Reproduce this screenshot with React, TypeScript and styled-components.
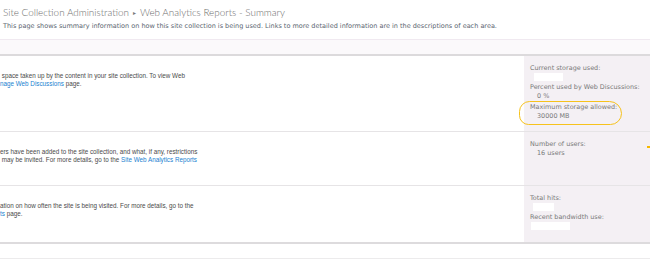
import React from 'react';
import styled, {createGlobalStyle} from 'styled-components';

const GlobalStyle = createGlobalStyle`
  html, body {
    margin: 0;
    padding: 0;
    background: #ffffff;
  }
  body {
    width: 650px;
    height: 259px;
    overflow: hidden;
  }
`;

const Page = styled.div`
  width: 650px;
  height: 259px;
  overflow: hidden;
  background: #ffffff;
  font-family: 'DejaVu Sans', Verdana, sans-serif;
`;

const Header = styled.header`
  padding: 6px 0 0 3px;
  height: 33px;
`;

const Title = styled.h1`
  margin: 0;
  font-family: 'Lato', 'Liberation Sans', Arial, sans-serif;
  font-weight: 300;
  font-size: 9.9px;
  line-height: 12px;
  color: #6c6c6c;
  white-space: nowrap;
`;

const Crumb = styled.span`
  display: inline-block;
  margin: 0 4px;
  font-size: 6px;
  vertical-align: 1px;
  color: #7a7a7a;
`;

const Description = styled.p`
  margin: 3px 0 0;
  font-size: 6.5px;
  line-height: 8px;
  color: #5a6570;
  white-space: nowrap;
`;

const Band = styled.div`
  height: 14px;
  border-top: 1px solid #f0e9f0;
  border-bottom: 2px solid #dcdadc;
  background: #fbf9fb;
`;

const Section = styled.section<{height: number; last?: boolean}>`
  display: grid;
  grid-template-columns: 524px 1fr;
  height: ${({height}) => height}px;
  border-bottom: ${({last}) => (last ? '2px solid #dddbdd' : '1px solid #e6e4e6')};
`;

const Summary = styled.div`
  padding-top: 16px;
  font-family: 'Liberation Sans', Tahoma, Arial, sans-serif;
  font-size: 6.3px;
  line-height: 8px;
  color: #4a4a4a;
  white-space: nowrap;
`;

const Line = styled.div``;

const ReportLink = styled.a`
  color: #1a7fd0;
  text-decoration: none;
`;

const Stats = styled.div`
  position: relative;
  background: #f4f0f4;
  padding: 8px 0 0 6px;
  font-size: 6.45px;
  line-height: 9px;
  color: #7a7a7a;
`;

const Group = styled.div`
  margin-bottom: 2px;
`;

const Label = styled.div`
  white-space: nowrap;
`;

const Value = styled.div`
  padding-left: 7px;
  white-space: nowrap;
`;

const Blank = styled.div<{width: number; indent: number}>`
  width: ${({width}) => width}px;
  height: 8px;
  margin: 0 0 0 ${({indent}) => indent}px;
  background: #ffffff;
`;

const Highlight = styled.div`
  position: absolute;
  left: -5px;
  top: 45px;
  width: 101px;
  height: 22px;
  border: 1.5px solid #f6c21c;
  border-radius: 11px 13px 12px 10px;
`;

const Tick = styled.div`
  position: absolute;
  right: 0;
  top: 14px;
  width: 3px;
  height: 2px;
  background: #f6b800;
`;

const Footer = styled.div`
  height: 14px;
  border-bottom: 1px solid #ecebec;
`;

export default function App() {
  return (
    <>
      <GlobalStyle />
      <Page>
        <Header>
          <Title>
            Site Collection Administration<Crumb>▸</Crumb>Web Analytics Reports - Summary
          </Title>
          <Description>
            This page shows summary information on how this site collection is being used. Links to more
            detailed information are in the descriptions of each area.
          </Description>
        </Header>
        <Band />

        <Section height={75}>
          <Summary>
            <Line>&nbsp;space taken up by the content in your site collection. To view Web</Line>
            <Line>
              <ReportLink href="#">nage Web Discussions</ReportLink> page.
            </Line>
          </Summary>
          <Stats>
            <Group>
              <Label>Current storage used:</Label>
              <Blank width={29} indent={4} />
            </Group>
            <Group>
              <Label>Percent used by Web Discussions:</Label>
              <Value>0 %</Value>
            </Group>
            <Group>
              <Label>Maximum storage allowed:</Label>
              <Value>30000 MB</Value>
            </Group>
            <Highlight />
          </Stats>
        </Section>

        <Section height={53}>
          <Summary>
            <Line>ers have been added to the site collection, and what, if any, restrictions</Line>
            <Line>
              &nbsp;may be invited. For more details, go to the{' '}
              <ReportLink href="#">Site Web Analytics Reports</ReportLink>
            </Line>
          </Summary>
          <Stats>
            <Group>
              <Label>Number of users:</Label>
              <Value>16 users</Value>
            </Group>
            <Tick />
          </Stats>
        </Section>

        <Section height={56} last>
          <Summary>
            <Line>ation on how often the site is being visited. For more details, go to the</Line>
            <Line>
              <ReportLink href="#">ts</ReportLink> page.
            </Line>
          </Summary>
          <Stats>
            <Group>
              <Label>Total hits:</Label>
              <Blank width={21} indent={3} />
            </Group>
            <Group>
              <Label>Recent bandwidth use:</Label>
              <Blank width={39} indent={1} />
            </Group>
          </Stats>
        </Section>

        <Footer />
      </Page>
    </>
  );
}
